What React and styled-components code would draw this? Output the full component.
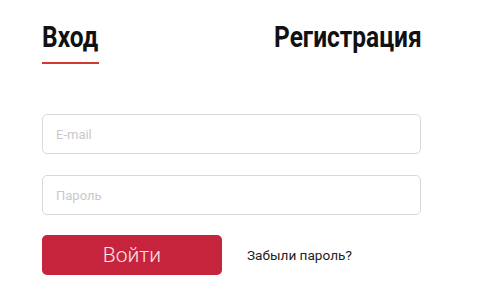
import React from "react";
import styled, { createGlobalStyle } from "styled-components";

const Global = createGlobalStyle`
  html, body { margin: 0; padding: 0; background: #fff; }
  body { font-family: Roboto, sans-serif; }
`;

const Wrap = styled.div`
  width: 379px;
  padding: 21px 0 0 42px;
  display: flex;
  flex-direction: column;
`;

const Tabs = styled.div`
  display: flex;
  justify-content: space-between;
  align-items: flex-start;
`;

const Tab = styled.div`
  width: ${(p) => p.$w}px;
  white-space: nowrap;
  padding-bottom: 9px;
  border-bottom: 2px solid ${(p) => (p.$active ? "#d0392f" : "transparent")};
`;

const TabLabel = styled.span`
  display: inline-block;
  font-family: Roboto, sans-serif;
  font-weight: 700;
  font-size: 29px;
  line-height: 32px;
  color: #111;
  transform: scaleX(0.845);
  transform-origin: left center;
`;

const Form = styled.div`
  margin-top: 50px;
  display: flex;
  flex-direction: column;
  gap: 21px;
`;

const Input = styled.input`
  box-sizing: border-box;
  width: 379px;
  height: 40px;
  border: 1px solid #d9d9d9;
  border-radius: 5px;
  padding: 0 13px;
  font-family: Roboto, sans-serif;
  font-size: 13px;
  color: #333;
  outline: none;
  &::placeholder { color: #c9c9c9; }
`;

const Row = styled.div`
  display: flex;
  align-items: center;
  margin-top: 20px;
  gap: 25px;
`;

const Button = styled.button`
  width: 180px;
  height: 40px;
  border: none;
  border-radius: 5px;
  background: #c5243c;
  color: #f8e6e8;
  font-family: Roboto, sans-serif;
  font-weight: 300;
  font-size: 21px;
  cursor: pointer;
`;

const Forgot = styled.a`
  font-family: Roboto, sans-serif;
  font-size: 13.6px;
  color: #222;
  text-decoration: none;
`;

export default function App() {
  return (
    <>
      <Global />
      <Wrap>
        <Tabs>
          <Tab $active $w={57}>
            <TabLabel>Вход</TabLabel>
          </Tab>
          <Tab $w={147}>
            <TabLabel>Регистрация</TabLabel>
          </Tab>
        </Tabs>
        <Form>
          <Input placeholder="E-mail" />
          <Input type="password" placeholder="Пароль" />
        </Form>
        <Row>
          <Button>Войти</Button>
          <Forgot href="#">Забыли пароль?</Forgot>
        </Row>
      </Wrap>
    </>
  );
}
